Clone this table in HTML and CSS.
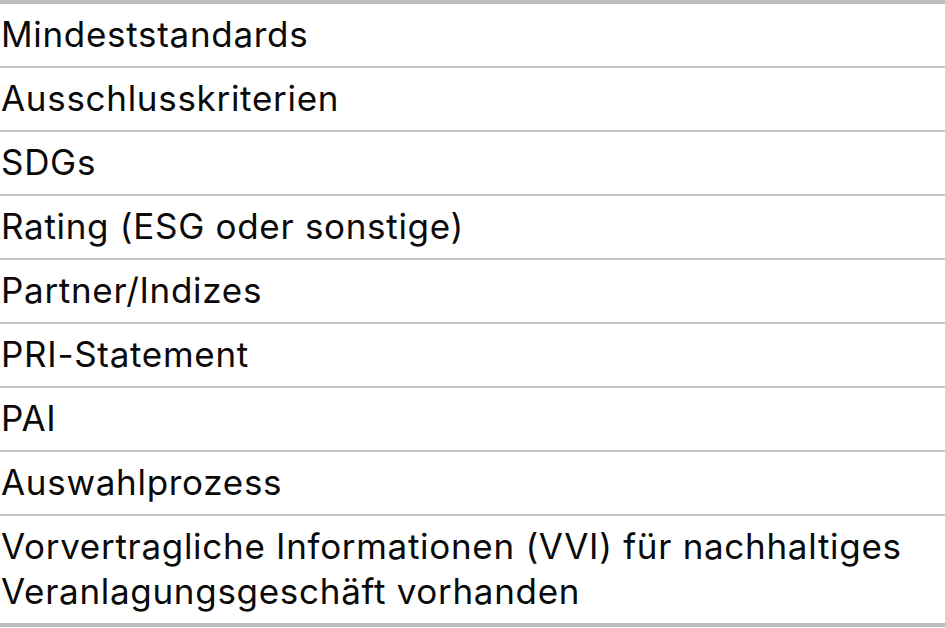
FILE: index.html
```html
<!DOCTYPE html>
<html lang="de">
<head>
<meta charset="utf-8">
<title>Kriterien</title>
<link rel="stylesheet" href="styles.css">
</head>
<body>
<table class="criteria">
  <tbody>
    <tr><td>Mindeststandards</td></tr>
    <tr><td>Ausschlusskriterien</td></tr>
    <tr><td>SDGs</td></tr>
    <tr><td>Rating (ESG oder sonstige)</td></tr>
    <tr><td>Partner/Indizes</td></tr>
    <tr><td>PRI-Statement</td></tr>
    <tr><td>PAI</td></tr>
    <tr><td>Auswahlprozess</td></tr>
    <tr><td>Vorvertragliche Informationen (VVI) für nachhaltiges Veranlagungsgeschäft vorhanden</td></tr>
  </tbody>
</table>
</body>
</html>
```

FILE: styles.css
```css
html, body {
  margin: 0;
  padding: 0;
  background: #ffffff;
}

.criteria {
  width: 945px;
  border-collapse: collapse;
  border-top: 4px solid #bdbdbd;
  border-bottom: 4px solid #bdbdbd;
  font-family: "Inter", "Liberation Sans", sans-serif;
  font-size: 35px;
  line-height: 45px;
  letter-spacing: 0.7px;
  color: #0a0a0a;
}

.criteria td {
  padding: 8px 20px 9px 1px;
  border-top: 2px solid #c8c8c8;
  vertical-align: middle;
  text-align: left;
}

.criteria tr:first-child td {
  border-top: none;
}
```
